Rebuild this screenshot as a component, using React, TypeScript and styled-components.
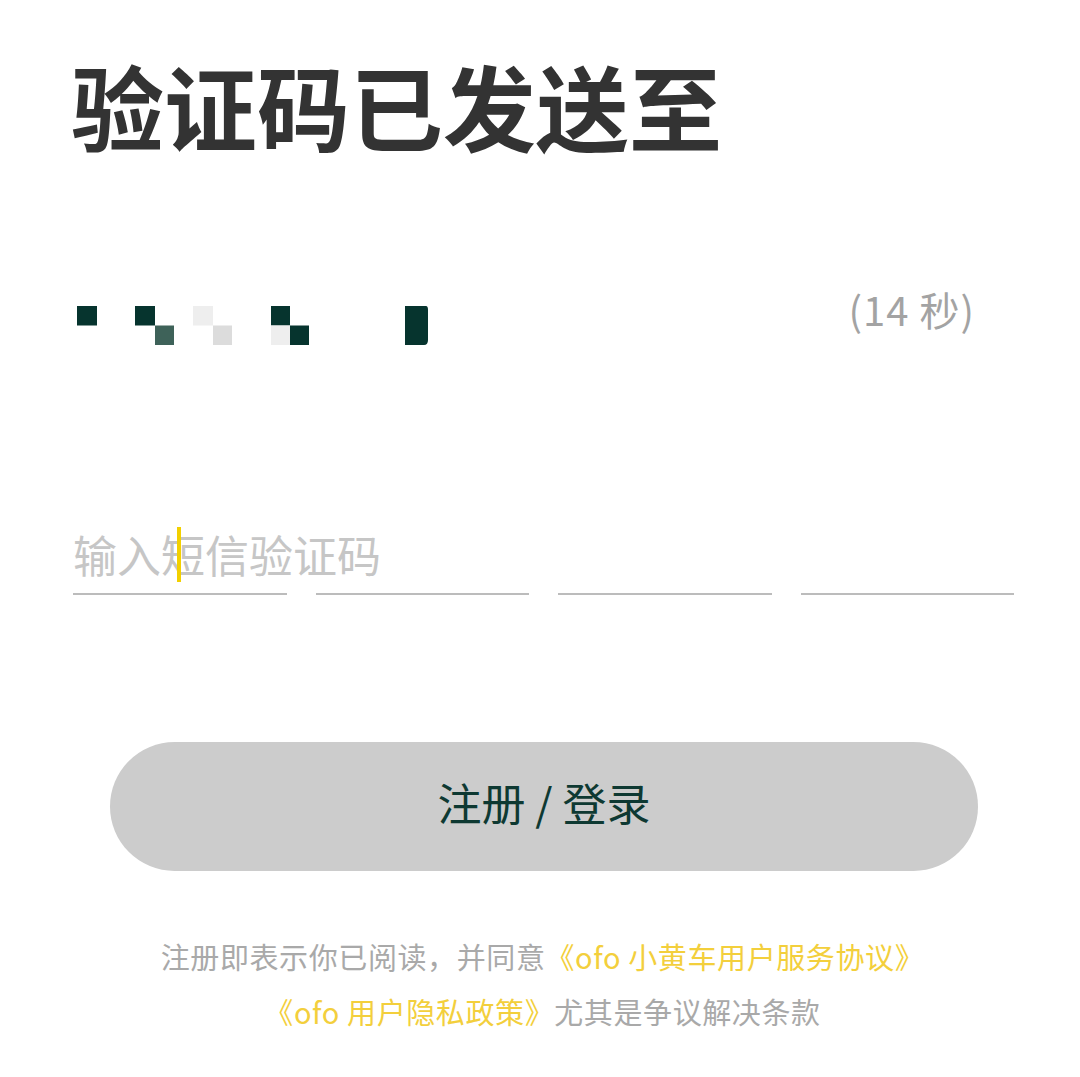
import React from "react";
import styled, { createGlobalStyle } from "styled-components";

const GlobalStyle = createGlobalStyle`
  html, body {
    margin: 0;
    padding: 0;
    background: #ffffff;
  }
  body {
    font-family: "Noto Sans CJK SC", "Noto Sans", sans-serif;
  }
`;

const Page = styled.div`
  width: 1080px;
  min-height: 1077px;
  box-sizing: border-box;
  padding: 0 66px 0 73px;
  background: #ffffff;
  display: flex;
  flex-direction: column;
`;

const Title = styled.h1`
  margin: 58px 0 0 -2px;
  font-size: 93px;
  line-height: 93px;
  height: 93px;
  font-weight: 700;
  color: #333333;
  letter-spacing: 0;
`;

const PhoneRow = styled.div`
  margin-top: 141px;
  display: flex;
  justify-content: space-between;
  align-items: flex-start;
`;

const Mosaic = styled.svg`
  display: block;
  margin-top: 14px;
  margin-left: 4px;
`;

const Timer = styled.span`
  font-size: 40px;
  line-height: 40px;
  color: #a3a3a3;
  margin-top: -3px;
  margin-right: 39px;
  letter-spacing: 1px;
`;

const CodeField = styled.div`
  margin-top: 187px;
  position: relative;
`;

const Placeholder = styled.div`
  font-size: 44px;
  line-height: 44px;
  height: 44px;
  color: #c6c6c6;
`;

const Caret = styled.span`
  position: absolute;
  left: 104px;
  top: -5px;
  width: 4px;
  height: 55px;
  background: #f2d000;
`;

const Cells = styled.div`
  margin-top: 17px;
  display: grid;
  grid-template-columns: repeat(4, 1fr);
  gap: 29px;
`;

const Cell = styled.div`
  height: 2px;
  background: #bcbcbc;
`;

const SubmitButton = styled.button`
  margin: 147px 36px 0 37px;
  height: 129px;
  border: none;
  border-radius: 65px;
  background: #cccccc;
  color: #0e3932;
  font-family: "Noto Sans CJK SC", "Noto Sans", sans-serif;
  font-size: 44px;
  line-height: 44px;
  padding: 0 0 10px 0;
  cursor: pointer;
`;

const Footer = styled.div`
  margin: 58px 0 0 -2px;
  text-align: center;
  font-size: 29px;
  letter-spacing: 0.6px;
  line-height: 55px;
  color: #a9a9a9;
`;

const FooterLine = styled.div``;

const Link = styled.span`
  color: #f3cf3c;
`;

const dark = "#06342e";

const mosaicCells: { x: number; y: number; w: number; h: number; c: string }[] = [
  { x: 0, y: 0, w: 20, h: 19.5, c: dark },
  { x: 58, y: 0, w: 20, h: 19.5, c: dark },
  { x: 78, y: 19.5, w: 19, h: 19.5, c: "#3e6259" },
  { x: 116, y: 0, w: 20, h: 19.5, c: "#eeeeee" },
  { x: 136, y: 19.5, w: 19, h: 19.5, c: "#dcdcdc" },
  { x: 194, y: 0, w: 19, h: 19.5, c: dark },
  { x: 194, y: 19.5, w: 19, h: 19.5, c: "#eeeeee" },
  { x: 213, y: 19.5, w: 19, h: 19.5, c: dark },
];

export default function App() {
  return (
    <>
      <GlobalStyle />
      <Page>
        <Title>验证码已发送至</Title>
        <PhoneRow>
          <Mosaic width="352" height="39" viewBox="0 0 352 39">
            {mosaicCells.map((m, i) => (
              <rect key={i} x={m.x} y={m.y} width={m.w} height={m.h} fill={m.c} />
            ))}
            <path d="M328 0 H349 Q351 0 351 4 V34 Q351 39 347 39 H328 Z" fill={dark} />
          </Mosaic>
          <Timer>(14 秒)</Timer>
        </PhoneRow>
        <CodeField>
          <Placeholder>输入短信验证码</Placeholder>
          <Caret />
          <Cells>
            <Cell />
            <Cell />
            <Cell />
            <Cell />
          </Cells>
        </CodeField>
        <SubmitButton>注册 / 登录</SubmitButton>
        <Footer>
          <FooterLine>
            注册即表示你已阅读，并同意<Link>《ofo 小黄车用户服务协议》</Link>
          </FooterLine>
          <FooterLine>
            <Link>《ofo 用户隐私政策》</Link>尤其是争议解决条款
          </FooterLine>
        </Footer>
      </Page>
    </>
  );
}
